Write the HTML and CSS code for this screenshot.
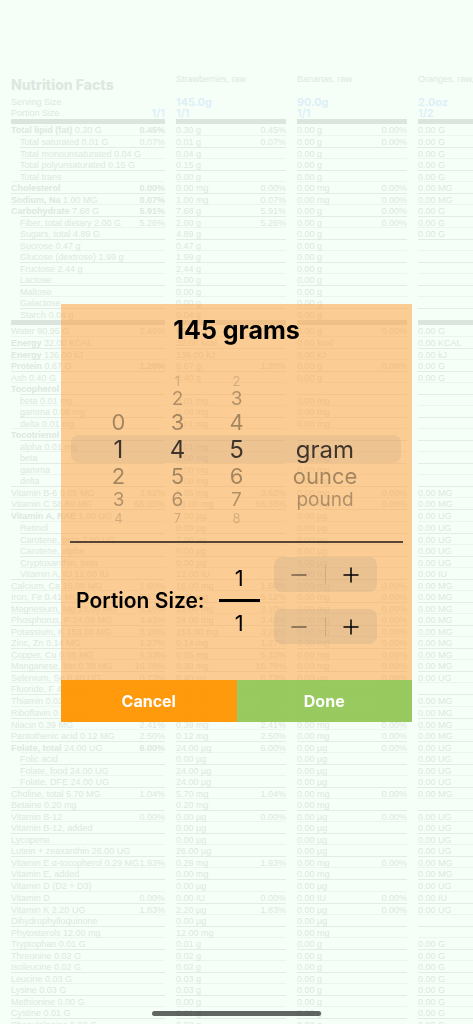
FILE: index.html
```html
<!DOCTYPE html>
<html lang="en">
<head>
  <meta charset="UTF-8" />
  <meta name="viewport" content="width=device-width, initial-scale=1" />
  <title>Nutrition Facts</title>
  <link rel="stylesheet" href="styles.css">
</head>
<body>
  <!-- Nutrient comparison table -->
  <main class="facts">
    <table class="facts-table">
      <colgroup>
        <col class="col-name">
        <col class="col-food">
        <col class="col-food">
        <col class="col-food">
      </colgroup>
      <thead>
        <tr class="head-foods">
          <th><h1>Nutrition Facts</h1></th>
          <th>Strawberries, raw</th>
          <th>Bananas, raw</th>
          <th>Oranges, raw,</th>
        </tr>
        <tr class="head-size">
          <th>Serving Size</th>
          <td class="size">145.0g</td>
          <td class="size">90.0g</td>
          <td class="size">2.0oz</td>
        </tr>
        <tr class="head-size">
          <th><div class="cell-head">Portion Size <span class="size">1/1</span></div></th>
          <td class="size">1/1</td>
          <td class="size">1/1</td>
          <td class="size">1/2</td>
        </tr>
      </thead>
      <tbody id="macros"></tbody>
      <tbody id="micros"></tbody>
    </table>
  </main>

  <!-- Serving dialog -->
  <div class="overlay" id="overlay">
    <form class="dialog" role="dialog" aria-labelledby="dialogTitle">
      <div class="dialog-body">
        <h2 id="dialogTitle">145 grams</h2>

        <div class="picker">
          <fieldset class="wheel" aria-label="Hundreds">
            <span class="far"></span>
            <span class="mid"></span>
            <label class="near"><input type="radio" name="hundreds" value="0">0</label>
            <label class="current"><input type="radio" name="hundreds" value="1" checked>1</label>
            <label class="near"><input type="radio" name="hundreds" value="2">2</label>
            <label class="mid"><input type="radio" name="hundreds" value="3">3</label>
            <label class="far"><input type="radio" name="hundreds" value="4">4</label>
          </fieldset>
          <fieldset class="wheel" aria-label="Tens">
            <label class="far"><input type="radio" name="tens" value="1">1</label>
            <label class="mid"><input type="radio" name="tens" value="2">2</label>
            <label class="near"><input type="radio" name="tens" value="3">3</label>
            <label class="current"><input type="radio" name="tens" value="4" checked>4</label>
            <label class="near"><input type="radio" name="tens" value="5">5</label>
            <label class="mid"><input type="radio" name="tens" value="6">6</label>
            <label class="far"><input type="radio" name="tens" value="7">7</label>
          </fieldset>
          <fieldset class="wheel" aria-label="Ones">
            <label class="far"><input type="radio" name="ones" value="2">2</label>
            <label class="mid"><input type="radio" name="ones" value="3">3</label>
            <label class="near"><input type="radio" name="ones" value="4">4</label>
            <label class="current"><input type="radio" name="ones" value="5" checked>5</label>
            <label class="near"><input type="radio" name="ones" value="6">6</label>
            <label class="mid"><input type="radio" name="ones" value="7">7</label>
            <label class="far"><input type="radio" name="ones" value="8">8</label>
          </fieldset>
          <fieldset class="wheel wheel-unit" aria-label="Unit">
            <span class="far"></span>
            <span class="mid"></span>
            <span class="near"></span>
            <label class="current"><input type="radio" name="unit" value="gram" checked>gram</label>
            <label class="near"><input type="radio" name="unit" value="ounce">ounce</label>
            <label class="mid"><input type="radio" name="unit" value="pound">pound</label>
            <span class="far"></span>
          </fieldset>
        </div>

        <div class="portion">
          <h3>Portion Size:</h3>
          <div class="fraction">
            <output id="top">1</output>
            <output id="bottom">1</output>
          </div>
          <div class="steppers">
            <div class="stepper" data-for="top">
              <button type="button" data-step="-1" aria-label="Decrease numerator" disabled>
                <svg viewBox="0 0 16 16"><path d="M1 8h14"/></svg>
              </button>
              <button type="button" data-step="1" aria-label="Increase numerator">
                <svg viewBox="0 0 16 16"><path d="M1 8h14M8 1v14"/></svg>
              </button>
            </div>
            <div class="stepper" data-for="bottom">
              <button type="button" data-step="-1" aria-label="Decrease denominator" disabled>
                <svg viewBox="0 0 16 16"><path d="M1 8h14"/></svg>
              </button>
              <button type="button" data-step="1" aria-label="Increase denominator">
                <svg viewBox="0 0 16 16"><path d="M1 8h14M8 1v14"/></svg>
              </button>
            </div>
          </div>
        </div>
      </div>

      <div class="actions">
        <button type="button" class="btn cancel">Cancel</button>
        <button type="button" class="btn done">Done</button>
      </div>
    </form>
  </div>

  <div class="home-indicator"></div>

  <script src="app.js"></script>
</body>
</html>
```
FILE: styles.css
```css
:root {
  --bg-color: #f5fff7;
  --text-color: #dee7e0;
  --line-color: #ebf4ed;
  --line-dark: #e2ebe4;
  --bar-color: #dbe4dd;
  --size-color: #dceef8;
  --panel-color: rgba(255, 162, 65, 0.55);
  --ui-font: Inter, sans-serif;
  --table-font: "Liberation Sans", Arial, sans-serif;
}

* {
  box-sizing: border-box;
}

body {
  margin: 0;
  height: 100vh;
  overflow: hidden;
  background-color: var(--bg-color);
  font-family: var(--ui-font);
}

/* Nutrient table */
.facts {
  height: 100%;
  padding-top: 73px;
  overflow: hidden;
}
.facts-table {
  width: 539px;
  table-layout: fixed;
  border-collapse: separate;
  border-spacing: 11px 0;
  font-family: var(--table-font);
  font-size: 9px;
  line-height: 11px;
  color: var(--text-color);
}
.col-name {
  width: 154px;
}
.col-food {
  width: 110px;
}
.facts-table th,
.facts-table td {
  padding: 0;
  text-align: left;
  font-weight: normal;
  white-space: nowrap;
}
.facts-table .head-foods th {
  height: 24px;
  line-height: 13px;
  vertical-align: top;
}
.facts-table h1 {
  margin: 0;
  font-family: var(--ui-font);
  font-size: 14px;
  line-height: 24px;
  font-weight: 800;
}
.facts-table .size {
  font-family: var(--ui-font);
  font-size: 11px;
  font-weight: 600;
  color: var(--size-color);
}
.cell-head {
  display: flex;
  justify-content: space-between;
}

/* Table rows */
.cell {
  display: flex;
  justify-content: space-between;
  height: 11px;
  line-height: 12px;
  border-top: 1px solid var(--line-color);
}
tr:nth-child(even) .cell,
tr:nth-child(16n+17) .cell {
  height: 12px;
}
tr:nth-child(odd) .cell {
  border-color: var(--line-dark);
}
tr:first-child .cell {
  height: 16px;
  border-top: 5px solid var(--bar-color);
}
.indent {
  margin-left: 9px;
}
.bold b,
.bold .percent {
  font-weight: bold;
}
b {
  font-weight: normal;
}

/* Dialog */
.overlay {
  position: fixed;
  inset: 0;
  display: flex;
  align-items: center;
  justify-content: center;
  padding-top: 2px;
}
.overlay.hidden {
  display: none;
}
.dialog {
  width: calc(100% - 122px);
  max-width: 420px;
}
.dialog-body {
  padding: 8px 9px 36px;
  background-color: var(--panel-color);
}
.dialog h2 {
  margin: 0;
  font-size: 25px;
  line-height: 36px;
  font-weight: 700;
  text-align: center;
}

/* Wheels */
.picker {
  position: relative;
  display: flex;
  padding: 25px 19px 15px;
  border-bottom: 2px solid rgba(0, 0, 0, 0.65);
}
.picker::before {
  content: "";
  position: absolute;
  left: 1px;
  right: 2px;
  top: 87px;
  height: 28px;
  border-radius: 8px;
  background-color: rgba(120, 120, 128, 0.1);
}
.wheel {
  display: flex;
  flex: 3;
  flex-direction: column;
  align-items: center;
  min-width: 0;
  margin: 0;
  padding: 0;
  border: 0;
}
.wheel-unit {
  flex: 6;
}
.wheel label {
  cursor: pointer;
}
.wheel input {
  appearance: none;
  width: 0;
  height: 0;
  margin: 0;
  float: left;
}
.current {
  height: 27px;
  line-height: 27px;
  font-size: 24px;
  color: rgba(0, 0, 0, 0.78);
}
.near {
  height: 27px;
  line-height: 27px;
  font-size: 22px;
  color: rgba(0, 0, 0, 0.35);
}
.mid {
  height: 20px;
  line-height: 20px;
  font-size: 19px;
  color: rgba(0, 0, 0, 0.3);
}
.far {
  height: 16px;
  line-height: 16px;
  font-size: 13px;
  color: rgba(0, 0, 0, 0.16);
}

/* Portion size */
.portion {
  display: flex;
  align-items: center;
  padding: 14px 26px 0 6px;
}
.portion h3 {
  margin: 0;
  font-size: 21px;
  font-weight: 600;
  white-space: nowrap;
}
.fraction {
  display: flex;
  flex-direction: column;
  width: 41px;
  margin: 0 auto;
  font-size: 22px;
  line-height: 42px;
  text-align: center;
}
.fraction output:first-child {
  border-bottom: 3px solid #000;
}
.steppers {
  display: flex;
  flex-direction: column;
  gap: 17px;
}
.stepper {
  display: flex;
  align-items: center;
  width: 103px;
  height: 35px;
  border-radius: 8px;
  background-color: rgba(120, 120, 128, 0.13);
}
.stepper button {
  display: flex;
  flex: 1;
  align-items: center;
  justify-content: center;
  height: 19px;
  padding: 0;
  border: 0;
  background: none;
  cursor: pointer;
}
.stepper button:first-child {
  border-right: 1px solid rgba(60, 60, 67, 0.15);
}
.stepper svg {
  width: 16px;
  height: 16px;
  fill: none;
  stroke: #000;
  stroke-width: 1.5;
  stroke-linecap: round;
}
.stepper button:disabled svg {
  opacity: 0.5;
}

/* Dialog buttons */
.actions {
  display: flex;
}
.btn {
  flex: 1;
  height: 42px;
  border: none;
  font-family: var(--ui-font);
  font-size: 16px;
  font-weight: 700;
  color: #fff;
  cursor: pointer;
}
.btn.cancel {
  background-color: rgba(255, 149, 0, 0.95);
}
.btn.done {
  background-color: rgba(139, 195, 74, 0.88);
}

.home-indicator {
  position: fixed;
  left: 50%;
  bottom: 8px;
  width: 169px;
  height: 5px;
  margin-left: -85px;
  border-radius: 3px;
  background-color: rgba(0, 0, 0, 0.6);
}
```
FILE: app.js
```js
// name, amount, unit, percent, style (i = indented, b = bold), listed for oranges
const macros = [
  ['Total lipid (fat)', '0.30', 'g', '0.45%', 'b', 1],
  ['Total saturated', '0.01', 'g', '0.07%', 'i', 1],
  ['Total monounsaturated', '0.04', 'g', '', 'i', 1],
  ['Total polyunsaturated', '0.15', 'g', '', 'i', 1],
  ['Total trans', '', 'g', '', 'i', 1],
  ['Cholesterol', '', 'mg', '0.00%', 'b', 1],
  ['Sodium, Na', '1.00', 'mg', '0.07%', 'b', 1],
  ['Carbohydrate', '7.68', 'g', '5.91%', 'b', 1],
  ['Fiber, total dietary', '2.00', 'g', '5.26%', 'i', 1],
  ['Sugars, total', '4.89', 'g', '', 'i', 1],
  ['Sucrose', '0.47', 'g', '', 'i', 0],
  ['Glucose (dextrose)', '1.99', 'g', '', 'i', 0],
  ['Fructose', '2.44', 'g', '', 'i', 0],
  ['Lactose', '', 'g', '', 'i', 0],
  ['Maltose', '', 'g', '', 'i', 0],
  ['Galactose', '', 'g', '', 'i', 0],
  ['Starch', '0.04', 'g', '', 'i', 0]
];

const micros = [
  ['Water', '90.95', 'g', '2.46%', '', 1],
  ['Energy', '32.00', 'kcal', '', 'b', 1],
  ['Energy', '136.00', 'kJ', '', 'b', 1],
  ['Protein', '0.67', 'g', '1.20%', 'b', 1],
  ['Ash', '0.40', 'g', '', '', 1],
  ['Tocopherol', '', '', '', 'b', 0],
  ['beta', '0.01', 'mg', '', 'i', 0],
  ['gamma', '0.08', 'mg', '', 'i', 0],
  ['delta', '0.01', 'mg', '', 'i', 0],
  ['Tocotrienol', '', '', '', 'b', 0],
  ['alpha', '0.01', 'mg', '', 'i', 0],
  ['beta', '', 'mg', '', 'i', 0],
  ['gamma', '', 'mg', '', 'i', 0],
  ['delta', '', 'mg', '', 'i', 0],
  ['Vitamin B-6', '0.05', 'mg', '3.62%', '', 1],
  ['Vitamin C', '58.80', 'mg', '65.33%', '', 1],
  ['Vitamin A, RAE', '1.00', 'µg', '', 'b', 1],
  ['Retinol', '', 'µg', '', 'i', 1],
  ['Carotene, beta', '7.00', 'µg', '', 'i', 1],
  ['Carotene, alpha', '', 'µg', '', 'i', 1],
  ['Cryptoxanthin, beta', '', 'µg', '', 'i', 1],
  ['Vitamin A, IU', '12.00', 'IU', '', 'i', 1],
  ['Calcium, Ca', '16.00', 'mg', '1.60%', '', 1],
  ['Iron, Fe', '0.41', 'mg', '5.12%', '', 1],
  ['Magnesium, Mg', '13.00', 'mg', '3.10%', '', 1],
  ['Phosphorus, P', '24.00', 'mg', '3.43%', '', 1],
  ['Potassium, K', '153.00', 'mg', '3.26%', '', 1],
  ['Zinc, Zn', '0.14', 'mg', '1.27%', '', 1],
  ['Copper, Cu', '0.05', 'mg', '5.33%', '', 1],
  ['Manganese, Mn', '0.39', 'mg', '16.78%', '', 1],
  ['Selenium, Se', '0.40', 'µg', '0.73%', '', 1],
  ['Fluoride, F', '4.40', 'µg', '0.11%', '', 0],
  ['Thiamin', '0.02', 'mg', '2.00%', '', 1],
  ['Riboflavin', '0.02', 'mg', '1.69%', '', 1],
  ['Niacin', '0.39', 'mg', '2.41%', '', 1],
  ['Pantothenic acid', '0.12', 'mg', '2.50%', '', 1],
  ['Folate, total', '24.00', 'µg', '6.00%', 'b', 1],
  ['Folic acid', '', 'µg', '', 'i', 1],
  ['Folate, food', '24.00', 'µg', '', 'i', 1],
  ['Folate, DFE', '24.00', 'µg', '', 'i', 1],
  ['Choline, total', '5.70', 'mg', '1.04%', '', 1],
  ['Betaine', '0.20', 'mg', '', '', 0],
  ['Vitamin B-12', '', 'µg', '0.00%', '', 1],
  ['Vitamin B-12, added', '', 'µg', '', '', 1],
  ['Lycopene', '', 'µg', '', '', 1],
  ['Lutein + zeaxanthin', '26.00', 'µg', '', '', 1],
  ['Vitamin E α-tocopherol', '0.29', 'mg', '1.93%', '', 1],
  ['Vitamin E, added', '', 'mg', '', '', 1],
  ['Vitamin D (D2 + D3)', '', 'µg', '', '', 1],
  ['Vitamin D', '', 'IU', '0.00%', '', 1],
  ['Vitamin K', '2.20', 'µg', '1.83%', '', 1],
  ['Dihydrophylloquinone', '', 'µg', '', '', 0],
  ['Phytosterols', '12.00', 'mg', '', '', 0],
  ['Tryptophan', '0.01', 'g', '', '', 1],
  ['Threonine', '0.02', 'g', '', '', 1],
  ['Isoleucine', '0.02', 'g', '', '', 1],
  ['Leucine', '0.03', 'g', '', '', 1],
  ['Lysine', '0.03', 'g', '', '', 1],
  ['Methionine', '0.00', 'g', '', '', 1],
  ['Cystine', '0.01', 'g', '', '', 1],
  ['Phenylalanine', '0.02', 'g', '', '', 1]
];

const labelUnits = { g: 'G', mg: 'MG', 'µg': 'UG', kcal: 'KCAL', kJ: 'kJ', IU: 'IU' };

function cell(text, percent) {
  return `<td><div class="cell"><span>${text}</span><span>${percent}</span></div></td>`;
}

function renderRows(id, rows) {
  document.getElementById(id).innerHTML = rows.map(([name, amount, unit, percent, style, oranges]) => {
    const labelUnit = oranges ? labelUnits[unit] : unit;
    const label = amount ? `${amount} ${labelUnit}` : '';
    const cls = style === 'i' ? 'indent' : style === 'b' ? 'bold' : '';
    return `<tr>
      <th scope="row"><div class="cell ${cls}"><span><b>${name}</b> ${label}</span><span class="percent">${percent}</span></div></th>
      ${cell(unit && `${amount || '0.00'} ${unit}`, percent)}
      ${cell(unit && `0.00 ${unit}`, percent && '0.00%')}
      ${cell(oranges ? `0.00 ${labelUnit}` : '', '')}
    </tr>`;
  }).join('');
}

renderRows('macros', macros);
renderRows('micros', micros);

// Steppers
document.querySelectorAll('.stepper').forEach(stepper => {
  const output = document.getElementById(stepper.dataset.for);
  stepper.querySelectorAll('button').forEach(button => {
    button.addEventListener('click', () => {
      const value = Number(output.value) + Number(button.dataset.step);
      output.value = value;
      stepper.querySelector('[data-step="-1"]').disabled = value <= 1;
    });
  });
});

// Serving title
const form = document.querySelector('.dialog');
form.addEventListener('change', () => {
  const amount = Number(form.hundreds.value + form.tens.value + form.ones.value);
  document.getElementById('dialogTitle').textContent = `${amount} ${form.unit.value}s`;
});

document.querySelectorAll('.btn').forEach(button => {
  button.addEventListener('click', () => {
    document.getElementById('overlay').classList.add('hidden');
  });
});
```
